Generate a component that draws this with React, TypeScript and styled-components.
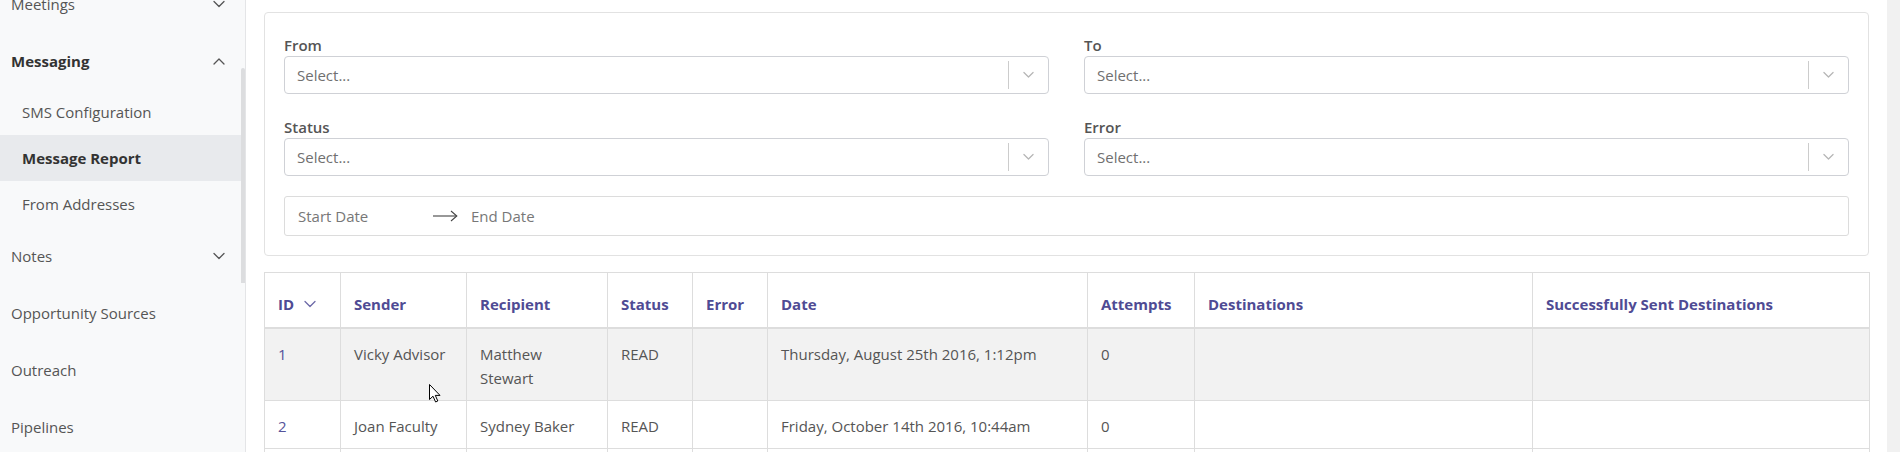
import React from 'react'
import styled, { createGlobalStyle } from 'styled-components'

const GlobalStyle = createGlobalStyle`
    html, body {
        margin: 0;
        padding: 0;
        height: 452px;
        overflow: hidden;
        background: #ffffff;
    }
    body {
        font-family: "Open Sans", "Noto Sans", sans-serif;
    }
`;

const Page = styled.div`
    position: relative;
    display: flex;
    height: 452px;
    overflow: hidden;
`;

const Sidebar = styled.aside`
    display: flex;
    width: 246px;
    flex-shrink: 0;
    background: #f8f9fa;
    overflow: hidden;
`;

const SideMenu = styled.nav`
    width: 241px;
    margin-top: -25px;
`;

const SideScroll = styled.div`
    width: 4px;
    border-right: 1px solid #e4e5e7;
`;

const SideThumb = styled.div`
    margin-top: 68px;
    height: 215px;
    width: 4px;
    background: #dcdddf;
    border-radius: 3px 3px 0 0;
`;

type MenuItemProps = {
    $sub?: boolean;
    $active?: boolean;
    $open?: boolean;
}
const MenuItem = styled.div<MenuItemProps>`
    display: flex;
    align-items: center;
    justify-content: space-between;
    height: ${props => props.$sub ? 46 : 57}px;
    padding: 0 16px 0 ${props => props.$sub ? 22 : 11}px;
    font-size: 15px;
    font-weight: ${props => props.$active || props.$open ? 700 : 400};
    color: ${props => props.$active || props.$open ? '#333' : '#555'};
    background: ${props => props.$active ? '#e8eaed' : 'transparent'};
`;

const Main = styled.main`
    flex: 1;
    min-width: 0;
    display: flex;
    flex-direction: column;
    gap: 16px;
    padding: 12px 18px;
`;

const PageScroll = styled.div`
    width: 13px;
    flex-shrink: 0;
    background: #f1f1f1;
`;

const FilterCard = styled.section`
    border: 1px solid #e2e2e2;
    border-radius: 4px;
    padding: 22px 19px 19px;
`;

const FilterGrid = styled.div`
    display: grid;
    grid-template-columns: 1fr 1fr;
    column-gap: 35px;
    row-gap: 23px;
`;

const Field = styled.div`
    display: flex;
    flex-direction: column;
`;

const Label = styled.label`
    font-size: 15px;
    line-height: 20px;
    padding-bottom: 1px;
    font-weight: 600;
    color: #555;
`;

const SelectBox = styled.div`
    display: flex;
    align-items: center;
    height: 38px;
    box-sizing: border-box;
    border: 1px solid #cfd1d6;
    border-radius: 4px;
    padding-left: 12px;
`;

const Placeholder = styled.span`
    flex: 1;
    font-size: 15px;
    color: #707070;
`;

const Separator = styled.span`
    width: 1px;
    height: 28px;
    background: #cccccc;
`;

const Indicator = styled.span`
    display: flex;
    align-items: center;
    justify-content: center;
    width: 39px;
`;

const DateRange = styled.div`
    display: flex;
    align-items: center;
    height: 40px;
    box-sizing: border-box;
    margin-top: 20px;
    border: 1px solid #dcdcdc;
    border-radius: 3px;
    padding-left: 13px;
    font-size: 15px;
    color: #777;
`;

const DateText = styled.span<{ $width?: number }>`
    width: ${props => props.$width ? `${props.$width}px` : 'auto'};
`;

const ArrowWrap = styled.span`
    display: flex;
    width: 25px;
    margin-right: 13px;
`;

const Table = styled.table`
    width: 100%;
    border-collapse: collapse;
    table-layout: fixed;
    border: 1px solid #dddddd;
`;

const Th = styled.th`
    padding: 21px 13px 13px;
    text-align: left;
    font-size: 15px;
    line-height: 20px;
    font-weight: 700;
    color: #4f4b94;
    border: 1px solid #dddddd;
    border-bottom: 2px solid #dddddd;
    white-space: nowrap;
`;

const HeadInner = styled.span`
    display: inline-flex;
    align-items: center;
    gap: 10px;
`;

const Tr = styled.tr<{ $hover?: boolean }>`
    background: ${props => props.$hover ? '#f2f2f2' : '#ffffff'};
`;

const Td = styled.td`
    padding: 13px 13px 10px;
    font-size: 15px;
    line-height: 24px;
    color: #555;
    border: 1px solid #dddddd;
    vertical-align: top;
`;

const IdLink = styled.span`
    color: #55539a;
`;

const Cursor = styled.svg`
    position: absolute;
    left: 429px;
    top: 384px;
`;

const Chevron = ({ up, color = '#555', w = 12 }: { up?: boolean; color?: string; w?: number }) => (
    <svg width={w} height={w / 2 + 2} viewBox="0 0 12 8" fill="none">
        <polyline
            points={up ? '1,7 6,2 11,7' : '1,1.5 6,6.5 11,1.5'}
            stroke={color}
            strokeWidth="1.3"
            strokeLinecap="round"
            strokeLinejoin="round"
        />
    </svg>
);

const menu = [
    { label: 'Meetings', chevron: 'down' },
    { label: 'Messaging', chevron: 'up', open: true },
    { label: 'SMS Configuration', sub: true },
    { label: 'Message Report', sub: true, active: true },
    { label: 'From Addresses', sub: true },
    { label: 'Notes', chevron: 'down' },
    { label: 'Opportunity Sources' },
    { label: 'Outreach' },
    { label: 'Pipelines' },
];

const columns = [
    { title: 'ID', width: 76, sort: true },
    { title: 'Sender', width: 126 },
    { title: 'Recipient', width: 141 },
    { title: 'Status', width: 85 },
    { title: 'Error', width: 75 },
    { title: 'Date', width: 320 },
    { title: 'Attempts', width: 107 },
    { title: 'Destinations', width: 338 },
    { title: 'Successfully Sent Destinations', width: 337 },
];

const rows = [
    { id: 1, sender: 'Vicky Advisor', recipient: 'Matthew Stewart', status: 'READ', date: 'Thursday, August 25th 2016, 1:12pm', attempts: 0 },
    { id: 2, sender: 'Joan Faculty', recipient: 'Sydney Baker', status: 'READ', date: 'Friday, October 14th 2016, 10:44am', attempts: 0 },
    { id: 3, sender: 'Vicky Advisor', recipient: 'Olivia Harris', status: 'READ', date: 'Monday, November 7th 2016, 9:03am', attempts: 0 },
];

const filters = ['From', 'To', 'Status', 'Error'];

function App() {
    return (
        <Page>
            <GlobalStyle />
            <Sidebar>
                <SideMenu>
                    {menu.map(item => (
                        <MenuItem key={item.label} $sub={item.sub} $active={item.active} $open={item.open}>
                            <span>{item.label}</span>
                            {item.chevron && <Chevron up={item.chevron === 'up'} />}
                        </MenuItem>
                    ))}
                </SideMenu>
                <SideScroll>
                    <SideThumb />
                </SideScroll>
            </Sidebar>

            <Main>
                <FilterCard>
                    <FilterGrid>
                        {filters.map(name => (
                            <Field key={name}>
                                <Label>{name}</Label>
                                <SelectBox>
                                    <Placeholder>Select...</Placeholder>
                                    <Separator />
                                    <Indicator>
                                        <Chevron color="#b5b5b5" w={11} />
                                    </Indicator>
                                </SelectBox>
                            </Field>
                        ))}
                    </FilterGrid>
                    <DateRange>
                        <DateText $width={135}>Start Date</DateText>
                        <ArrowWrap>
                            <svg width="25" height="12" viewBox="0 0 25 12" fill="none">
                                <line x1="0" y1="6" x2="23.5" y2="6" stroke="#444" strokeWidth="1.1" />
                                <polyline points="18,1 23.8,6 18,11" stroke="#444" strokeWidth="1.1" fill="none" />
                            </svg>
                        </ArrowWrap>
                        <DateText>End Date</DateText>
                    </DateRange>
                </FilterCard>

                <Table>
                    <colgroup>
                        {columns.map(col => <col key={col.title} style={{ width: col.width }} />)}
                    </colgroup>
                    <thead>
                        <tr>
                            {columns.map(col => (
                                <Th key={col.title}>
                                    <HeadInner>
                                        {col.title}
                                        {col.sort && <Chevron color="#6d6aa8" w={12} />}
                                    </HeadInner>
                                </Th>
                            ))}
                        </tr>
                    </thead>
                    <tbody>
                        {rows.map((row, index) => (
                            <Tr key={row.id} $hover={index === 0}>
                                <Td><IdLink>{row.id}</IdLink></Td>
                                <Td>{row.sender}</Td>
                                <Td>{row.recipient}</Td>
                                <Td>{row.status}</Td>
                                <Td></Td>
                                <Td>{row.date}</Td>
                                <Td>{row.attempts}</Td>
                                <Td></Td>
                                <Td></Td>
                            </Tr>
                        ))}
                    </tbody>
                </Table>
            </Main>

            <PageScroll />

            <Cursor width="12" height="19" viewBox="0 0 12 19">
                <path d="M0.5 0.5 L0.5 15.5 L4 12.2 L6.6 18 L8.8 17 L6.3 11.4 L11 11.4 Z" fill="#fff" stroke="#000" strokeWidth="1" strokeLinejoin="round" />
            </Cursor>
        </Page>
    )
}

export default App
